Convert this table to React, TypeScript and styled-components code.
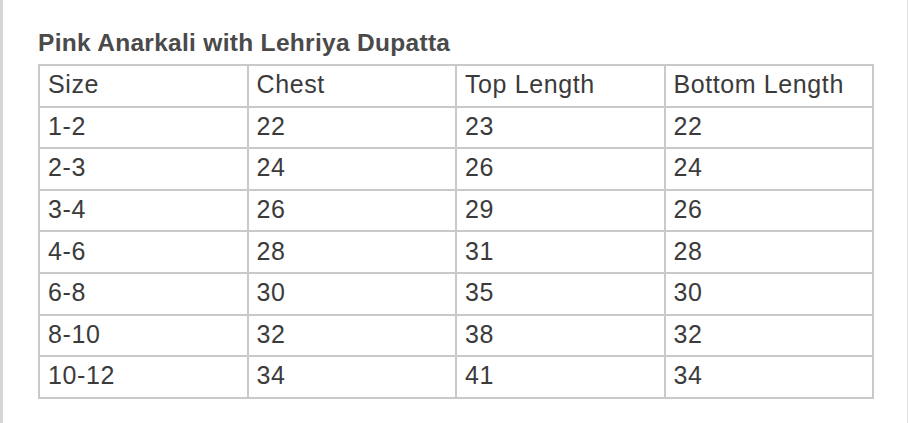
import styled, {createGlobalStyle} from "styled-components";

const GlobalStyle = createGlobalStyle`
	html, body {
		margin: 0;
		padding: 0;
		background: #ffffff;
	}
	body {
		font-family: "Liberation Sans", Arial, sans-serif;
	}
`;

const Page = styled.div`
	display: flex;
	width: 910px;
	height: 423px;
	background: #ffffff;
	overflow: hidden;
`;
const LeftEdge = styled.div`
	width: 3px;
	background: #d6d6d6;
`;
const Main = styled.main`
	flex: 1;
	padding: 27px 0 0 35px;
`;
const RightEdge = styled.div`
	width: 1px;
	margin-right: 2px;
	background: #e2e2e2;
`;
const Title = styled.h2`
	margin: 0 0 6px 0;
	font-size: 24.5px;
	font-weight: 700;
	color: #4a4a4a;
	line-height: 31px;
	letter-spacing: 0.3px;
`;
const SizeTable = styled.table`
	width: 836px;
	border-collapse: collapse;
	table-layout: fixed;
	border: 2px solid #c9c9c9;
`;
const Cell = styled.td`
	height: 36.6px;
	padding: 0 8px 3px 8px;
	border: 2px solid #c9c9c9;
	font-size: 25px;
	color: #3b3b3b;
	font-weight: 400;
	text-align: left;
	vertical-align: middle;
	line-height: 28px;
	letter-spacing: 0.6px;
`;

//interface
interface IRow{
	size: string;
	chest: string;
	top: string;
	bottom: string;
}

const rows: IRow[] = [
	{size: "1-2", chest: "22", top: "23", bottom: "22"},
	{size: "2-3", chest: "24", top: "26", bottom: "24"},
	{size: "3-4", chest: "26", top: "29", bottom: "26"},
	{size: "4-6", chest: "28", top: "31", bottom: "28"},
	{size: "6-8", chest: "30", top: "35", bottom: "30"},
	{size: "8-10", chest: "32", top: "38", bottom: "32"},
	{size: "10-12", chest: "34", top: "41", bottom: "34"},
];

function App(){
	return (
		<>
			<GlobalStyle />
			<Page>
				<LeftEdge />
				<Main>
					<Title>Pink Anarkali with Lehriya Dupatta</Title>
					<SizeTable>
						<tbody>
							<tr>
								<Cell>Size</Cell>
								<Cell>Chest</Cell>
								<Cell>Top Length</Cell>
								<Cell>Bottom Length</Cell>
							</tr>
							{rows.map((row)=>(
								<tr key={row.size}>
									<Cell>{row.size}</Cell>
									<Cell>{row.chest}</Cell>
									<Cell>{row.top}</Cell>
									<Cell>{row.bottom}</Cell>
								</tr>
							))}
						</tbody>
					</SizeTable>
				</Main>
				<RightEdge />
			</Page>
		</>
	);
}
export default App;
